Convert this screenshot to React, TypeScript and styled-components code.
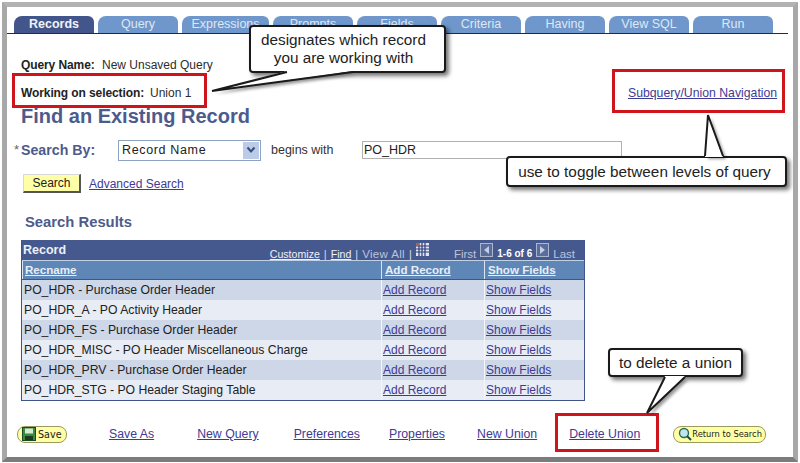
import React from "react";
import styled, { createGlobalStyle } from "styled-components";

const Global = createGlobalStyle`
  html, body { margin: 0; padding: 0; background: #fff; }
  body { font-family: "Liberation Sans", Arial, sans-serif; font-size: 12px; color: #222; }
`;

const Frame = styled.div`
  position: relative;
  box-sizing: border-box;
  width: 796px;
  height: 460px;
  margin: 2px 0 0 2px;
  background: #fff;
  border-style: solid;
  border-width: 5px;
  border-color: #b2b2b2 #a8a8a8 #7c7c7c #a8a8a8;
  overflow: hidden;
`;

const TabBar = styled.div`
  display: flex;
  gap: 4px;
  box-sizing: border-box;
  width: 781px;
  height: 27px;
  padding: 9px 0 0 7px;
  border-bottom: 1px solid #1e2a4a;
`;

const Tab = styled.div<{ $active?: boolean; $w: number }>`
  box-sizing: border-box;
  width: ${(p) => p.$w}px;
  height: 17px;
  line-height: 16px;
  text-align: center;
  font-size: 12.5px;
  font-weight: ${(p) => (p.$active ? 700 : 400)};
  color: ${(p) => (p.$active ? "#f2f4f9" : "#dfe7f3")};
  background: ${(p) => (p.$active ? "#42568c" : "#6f97cb")};
  border-radius: 8px 6px 0 0;
`;

const Body = styled.div`
  padding: 0 0 0 14px;
`;

const InfoRow = styled.div<{ $top: number }>`
  display: flex;
  align-items: center;
  height: 16px;
  margin-top: ${(p) => p.$top}px;
  font-size: 12px;
`;

const InfoLabel = styled.span<{ $w: number }>`
  width: ${(p) => p.$w}px;
  font-weight: 700;
  font-size: 12px;
  letter-spacing: -0.1px;
  color: #222;
`;

const InfoValue = styled.span`
  color: #2c2c2c;
`;

const Title = styled.h1`
  margin: 3px 0 0;
  height: 24px;
  line-height: 24px;
  font-size: 20px;
  font-weight: 700;
  color: #4d5b8c;
`;

const SearchRow = styled.div`
  display: flex;
  align-items: center;
  height: 20px;
  margin-top: 12px;
`;

const SearchLabel = styled.label`
  position: relative;
  width: 97px;
  font-size: 14.2px;
  font-weight: 700;
  color: #4d5b8c;
  &::before {
    content: "*";
    position: absolute;
    left: -7px;
    top: 0;
    font-size: 13px;
    font-weight: 400;
    color: #666;
  }
`;

const SelectBox = styled.div`
  box-sizing: border-box;
  display: flex;
  align-items: center;
  justify-content: space-between;
  width: 143px;
  height: 21px;
  padding: 1px 1px 1px 3px;
  border: 1px solid #8ea3c4;
  font-size: 12.5px;
  letter-spacing: 0.65px;
`;

const Chevron = styled.span`
  display: flex;
  align-items: center;
  justify-content: center;
  width: 16px;
  height: 17px;
  background: #bccbe8;
`;

const BeginsWith = styled.span`
  width: 91px;
  margin-left: 10px;
  font-size: 12.5px;
  color: #333;
`;

const TextBox = styled.div`
  box-sizing: border-box;
  width: 260px;
  height: 18px;
  line-height: 16px;
  padding-left: 1px;
  border: 1px solid #b0b0b0;
  font-size: 12.5px;
  color: #222;
`;

const ActionRow = styled.div`
  display: flex;
  align-items: center;
  gap: 8px;
  height: 19px;
  margin: 14px 0 0 2px;
`;

const SearchButton = styled.div`
  box-sizing: border-box;
  width: 58px;
  height: 19px;
  line-height: 16px;
  text-align: center;
  font-size: 12px;
  background: #ffffa8;
  border-style: solid;
  border-color: #d8d8d8 #555 #555 #d8d8d8;
  border-width: 1px 2px 2px 1px;
  color: #222;
`;

const Link = styled.a`
  color: #3f3a94;
  text-decoration: underline;
  font-size: 12px;
  cursor: pointer;
`;

const ResultsTitle = styled.h2`
  margin: 20px 0 0 4px;
  height: 18px;
  line-height: 18px;
  font-size: 14.8px;
  font-weight: 700;
  color: #4d5b8c;
`;

const Grid = styled.div`
  box-sizing: border-box;
  width: 564px;
  margin-top: 9px;
  border: 1px solid #3f5488;
  border-top: 0;
`;

const GridTitle = styled.div`
  display: flex;
  align-items: center;
  justify-content: space-between;
  height: 20px;
  padding: 0 9px 0 1px;
  background: #46598f;
  color: #fff;
`;

const GridName = styled.span`
  font-size: 12.5px;
  font-weight: 700;
  color: #edf0f7;
`;

const Pager = styled.div`
  display: flex;
  align-items: flex-end;
  height: 20px;
  gap: 4px;
  font-size: 11px;
  color: #d6dcea;
`;

const PagerLink = styled.a`
  color: #eef1f8;
  text-decoration: underline;
  font-size: 10.6px;
`;

const PagerMuted = styled.span<{ $spread?: boolean }>`
  color: #b9c4dc;
  font-size: 11.5px;
  letter-spacing: ${(p) => (p.$spread ? "0.35px" : "0")};
`;

const PagerCount = styled.span`
  font-size: 10px;
  font-weight: 700;
  line-height: 13px;
  color: #fff;
`;

const PagerArrow = styled.span`
  box-sizing: border-box;
  display: flex;
  align-items: center;
  justify-content: center;
  width: 13px;
  height: 14px;
  margin-bottom: 3px;
  border: 1px solid #aab5d0;
  background: #5a6c9c;
`;

const GridIcon = styled.svg`
  margin: 0 21px 4px 0;
`;

const columns = "359px 103px 1fr";

const HeadRow = styled.div`
  display: grid;
  grid-template-columns: ${columns};
  height: 20px;
  background: #5e87b8;
  border-top: 1px solid #c2d0e4;
  box-sizing: border-box;
  border-bottom: 1px solid #3f5488;
`;

const HeadCell = styled.div`
  padding-left: 2px;
  line-height: 18px;
  border-left: 1px solid #dbe4f0;
  font-size: 11.6px;
  font-weight: 700;
  color: #e8edf6;
  text-decoration: underline;
  & + & {
    padding-left: 3px;
  }
`;

const Row = styled.div<{ $odd: boolean }>`
  display: grid;
  grid-template-columns: ${columns};
  height: 20px;
  background: ${(p) => (p.$odd ? "#cdd7e8" : "#e7ecf5")};
`;

const Cell = styled.div`
  padding-left: 2px;
  line-height: 20px;
  font-size: 12.2px;
  color: #222;
  & + & {
    padding-left: 1px;
    border-left: 1px solid #f4f6fa;
  }
`;

const Footer = styled.div`
  display: flex;
  align-items: center;
  height: 18px;
  margin: 24px 0 0 -4px;
`;

const Pill = styled.div<{ $w: number; $left?: number; $gap: number }>`
  box-sizing: border-box;
  display: flex;
  align-items: center;
  gap: ${(p) => p.$gap}px;
  width: ${(p) => p.$w}px;
  height: 17px;
  margin-left: ${(p) => p.$left ?? 0}px;
  padding-left: 4px;
  background: #ffffa6;
  border: 1px solid #9a9a60;
  border-radius: 8px;
  color: #222;
`;

const PillText = styled.span<{ $size: number }>`
  font-family: "DejaVu Sans", sans-serif;
  font-size: ${(p) => p.$size}px;
  white-space: nowrap;
`;

const FooterLink = styled(Link)<{ $left: number }>`
  margin-left: ${(p) => p.$left}px;
  font-size: 12.3px;
`;

const NavLink = styled(Link)`
  position: absolute;
  left: 621px;
  top: 79px;
  font-size: 12.25px;
`;

const Highlight = styled.div<{ $x: number; $y: number; $w: number; $h: number }>`
  position: absolute;
  box-sizing: border-box;
  left: ${(p) => p.$x}px;
  top: ${(p) => p.$y}px;
  width: ${(p) => p.$w}px;
  height: ${(p) => p.$h}px;
  border: 3px solid #d0141c;
  pointer-events: none;
`;

const Bubble = styled.div<{ $x: number; $y: number; $w: number; $h: number; $shift?: number }>`
  position: absolute;
  box-sizing: border-box;
  left: ${(p) => p.$x}px;
  top: ${(p) => p.$y}px;
  width: ${(p) => p.$w}px;
  height: ${(p) => p.$h}px;
  padding-right: ${(p) => p.$shift ?? 0}px;
  display: flex;
  align-items: center;
  justify-content: center;
  text-align: center;
  background: #fff;
  border: 2px solid #1a1a1a;
  border-radius: 4px;
  box-shadow: 3px 3px 4px rgba(0, 0, 0, 0.55);
  font-size: 15.3px;
  line-height: 18px;
  color: #222;
`;

const Tails = styled.svg`
  position: absolute;
  left: 0;
  top: 0;
  overflow: visible;
  pointer-events: none;
`;

const TailShadow = styled.path`
  fill: rgba(0, 0, 0, 0.4);
  filter: blur(1.5px);
`;

const TailFill = styled.path`
  fill: #fff;
`;

const TailEdge = styled.path`
  fill: none;
  stroke: #1a1a1a;
  stroke-width: 2;
`;

const tabs: [string, number, boolean?][] = [
  ["Records", 80, true],
  ["Query", 80],
  ["Expressions", 87],
  ["Prompts", 80],
  ["Fields", 80],
  ["Criteria", 80],
  ["Having", 80],
  ["View SQL", 80],
  ["Run", 80],
];

const rows = [
  "PO_HDR - Purchase Order Header",
  "PO_HDR_A - PO Activity Header",
  "PO_HDR_FS - Purchase Order Header",
  "PO_HDR_MISC - PO Header Miscellaneous Charge",
  "PO_HDR_PRV - Purchase Order Header",
  "PO_HDR_STG - PO Header Staging Table",
];

const tailShapes = [
  { fill: "M205 84 L280 64 L346 64 Z", edge: "M280 65 L205 84 L346 65" },
  { fill: "M701 108 L698 150 L716 150 Z", edge: "M698 149 L701 108 L716 149" },
  { fill: "M640 406 L658 369 L678 369 Z", edge: "M658 370 L640 406 L678 370" },
];

export default function App() {
  return (
    <>
      <Global />
      <Frame>
        <TabBar>
          {tabs.map(([t, w, a]) => (
            <Tab key={t} $w={w} $active={a}>
              {t}
            </Tab>
          ))}
        </TabBar>
        <Body>
          <InfoRow $top={23}>
            <InfoLabel $w={81}>Query Name:</InfoLabel>
            <InfoValue>New Unsaved Query</InfoValue>
          </InfoRow>
          <InfoRow $top={12}>
            <InfoLabel $w={129}>Working on selection:</InfoLabel>
            <InfoValue>Union 1</InfoValue>
          </InfoRow>
          <Title>Find an Existing Record</Title>
          <SearchRow>
            <SearchLabel>Search By:</SearchLabel>
            <SelectBox>
              Record Name
              <Chevron>
                <svg width="10" height="8" viewBox="0 0 10 8">
                  <path d="M1.5 1.5 5 5.5 8.5 1.5" fill="none" stroke="#33507f" strokeWidth="2" />
                </svg>
              </Chevron>
            </SelectBox>
            <BeginsWith>begins with</BeginsWith>
            <TextBox>PO_HDR</TextBox>
          </SearchRow>
          <ActionRow>
            <SearchButton>Search</SearchButton>
            <Link>Advanced Search</Link>
          </ActionRow>
          <ResultsTitle>Search Results</ResultsTitle>
          <Grid>
            <GridTitle>
              <GridName>Record</GridName>
              <Pager>
                <PagerLink>Customize</PagerLink>|<PagerLink>Find</PagerLink>|<PagerMuted $spread>View All</PagerMuted>|
                <GridIcon width="13" height="13" viewBox="0 0 13 13">
                  <rect width="13" height="13" fill="#dfe5f3" />
                  <path d="M0 3h13M0 6h13M0 9h13M3 0v13M6 0v13M9 0v13" stroke="#2c3c78" strokeWidth="1.2" />
                  <rect width="3" height="3" fill="#b0604e" />
                </GridIcon>
                <PagerMuted>First</PagerMuted>
                <PagerArrow>
                  <svg width="7" height="8" viewBox="0 0 7 8">
                    <path d="M6 0v8L1 4z" fill="#c5cde0" />
                  </svg>
                </PagerArrow>
                <PagerCount>1-6 of 6</PagerCount>
                <PagerArrow>
                  <svg width="7" height="8" viewBox="0 0 7 8">
                    <path d="M1 0v8l5-4z" fill="#c5cde0" />
                  </svg>
                </PagerArrow>
                <PagerMuted>Last</PagerMuted>
              </Pager>
            </GridTitle>
            <HeadRow>
              <HeadCell>Recname</HeadCell>
              <HeadCell>Add Record</HeadCell>
              <HeadCell>Show Fields</HeadCell>
            </HeadRow>
            {rows.map((r, i) => (
              <Row key={r} $odd={i % 2 === 0}>
                <Cell>{r}</Cell>
                <Cell>
                  <Link>Add Record</Link>
                </Cell>
                <Cell>
                  <Link>Show Fields</Link>
                </Cell>
              </Row>
            ))}
          </Grid>
          <Footer>
            <Pill $w={50} $gap={2}>
              <svg width="14" height="14" viewBox="0 0 14 14">
                <rect x="0.5" y="0.5" width="13" height="13" fill="#3a8a42" stroke="#1c4a24" />
                <rect x="3" y="1.5" width="8" height="5" fill="#d6ead6" />
                <rect x="3" y="9" width="8" height="4" fill="#1c3a22" />
              </svg>
              <PillText $size={9.6}>Save</PillText>
            </Pill>
            <FooterLink $left={42}>Save As</FooterLink>
            <FooterLink $left={43}>New Query</FooterLink>
            <FooterLink $left={35}>Preferences</FooterLink>
            <FooterLink $left={29}>Properties</FooterLink>
            <FooterLink $left={32}>New Union</FooterLink>
            <FooterLink $left={32}>Delete Union</FooterLink>
            <Pill $w={93} $left={33} $gap={0}>
              <svg width="14" height="14" viewBox="0 0 14 14">
                <circle cx="6" cy="6" r="4.5" fill="#bfe6ef" stroke="#2a6a5a" strokeWidth="1.4" />
                <path d="M9 9 13 13" stroke="#1d4a3a" strokeWidth="2" />
              </svg>
              <PillText $size={8.3}>Return to Search</PillText>
            </Pill>
          </Footer>
        </Body>

        <NavLink>Subquery/Union Navigation</NavLink>

        <Highlight $x={5} $y={66} $w={195} $h={35} />
        <Highlight $x={605} $y={62} $w={173} $h={44} />
        <Highlight $x={548} $y={406} $w={104} $h={39} />

        <Bubble $x={242} $y={18} $w={197} $h={48} $shift={8}>
          designates which record
          <br />
          you are working with
        </Bubble>
        <Bubble $x={499} $y={149} $w={281} $h={31} $shift={4}>
          use to toggle between levels of query
        </Bubble>
        <Bubble $x={601} $y={341} $w={135} $h={29}>
          to delete a union
        </Bubble>
        <Tails width="10" height="10">
          {tailShapes.map((s) => (
            <g key={s.fill}>
              <TailShadow d={s.edge} transform="translate(3 3)" />
              <TailFill d={s.fill} />
              <TailEdge d={s.edge} />
            </g>
          ))}
        </Tails>
      </Frame>
    </>
  );
}
